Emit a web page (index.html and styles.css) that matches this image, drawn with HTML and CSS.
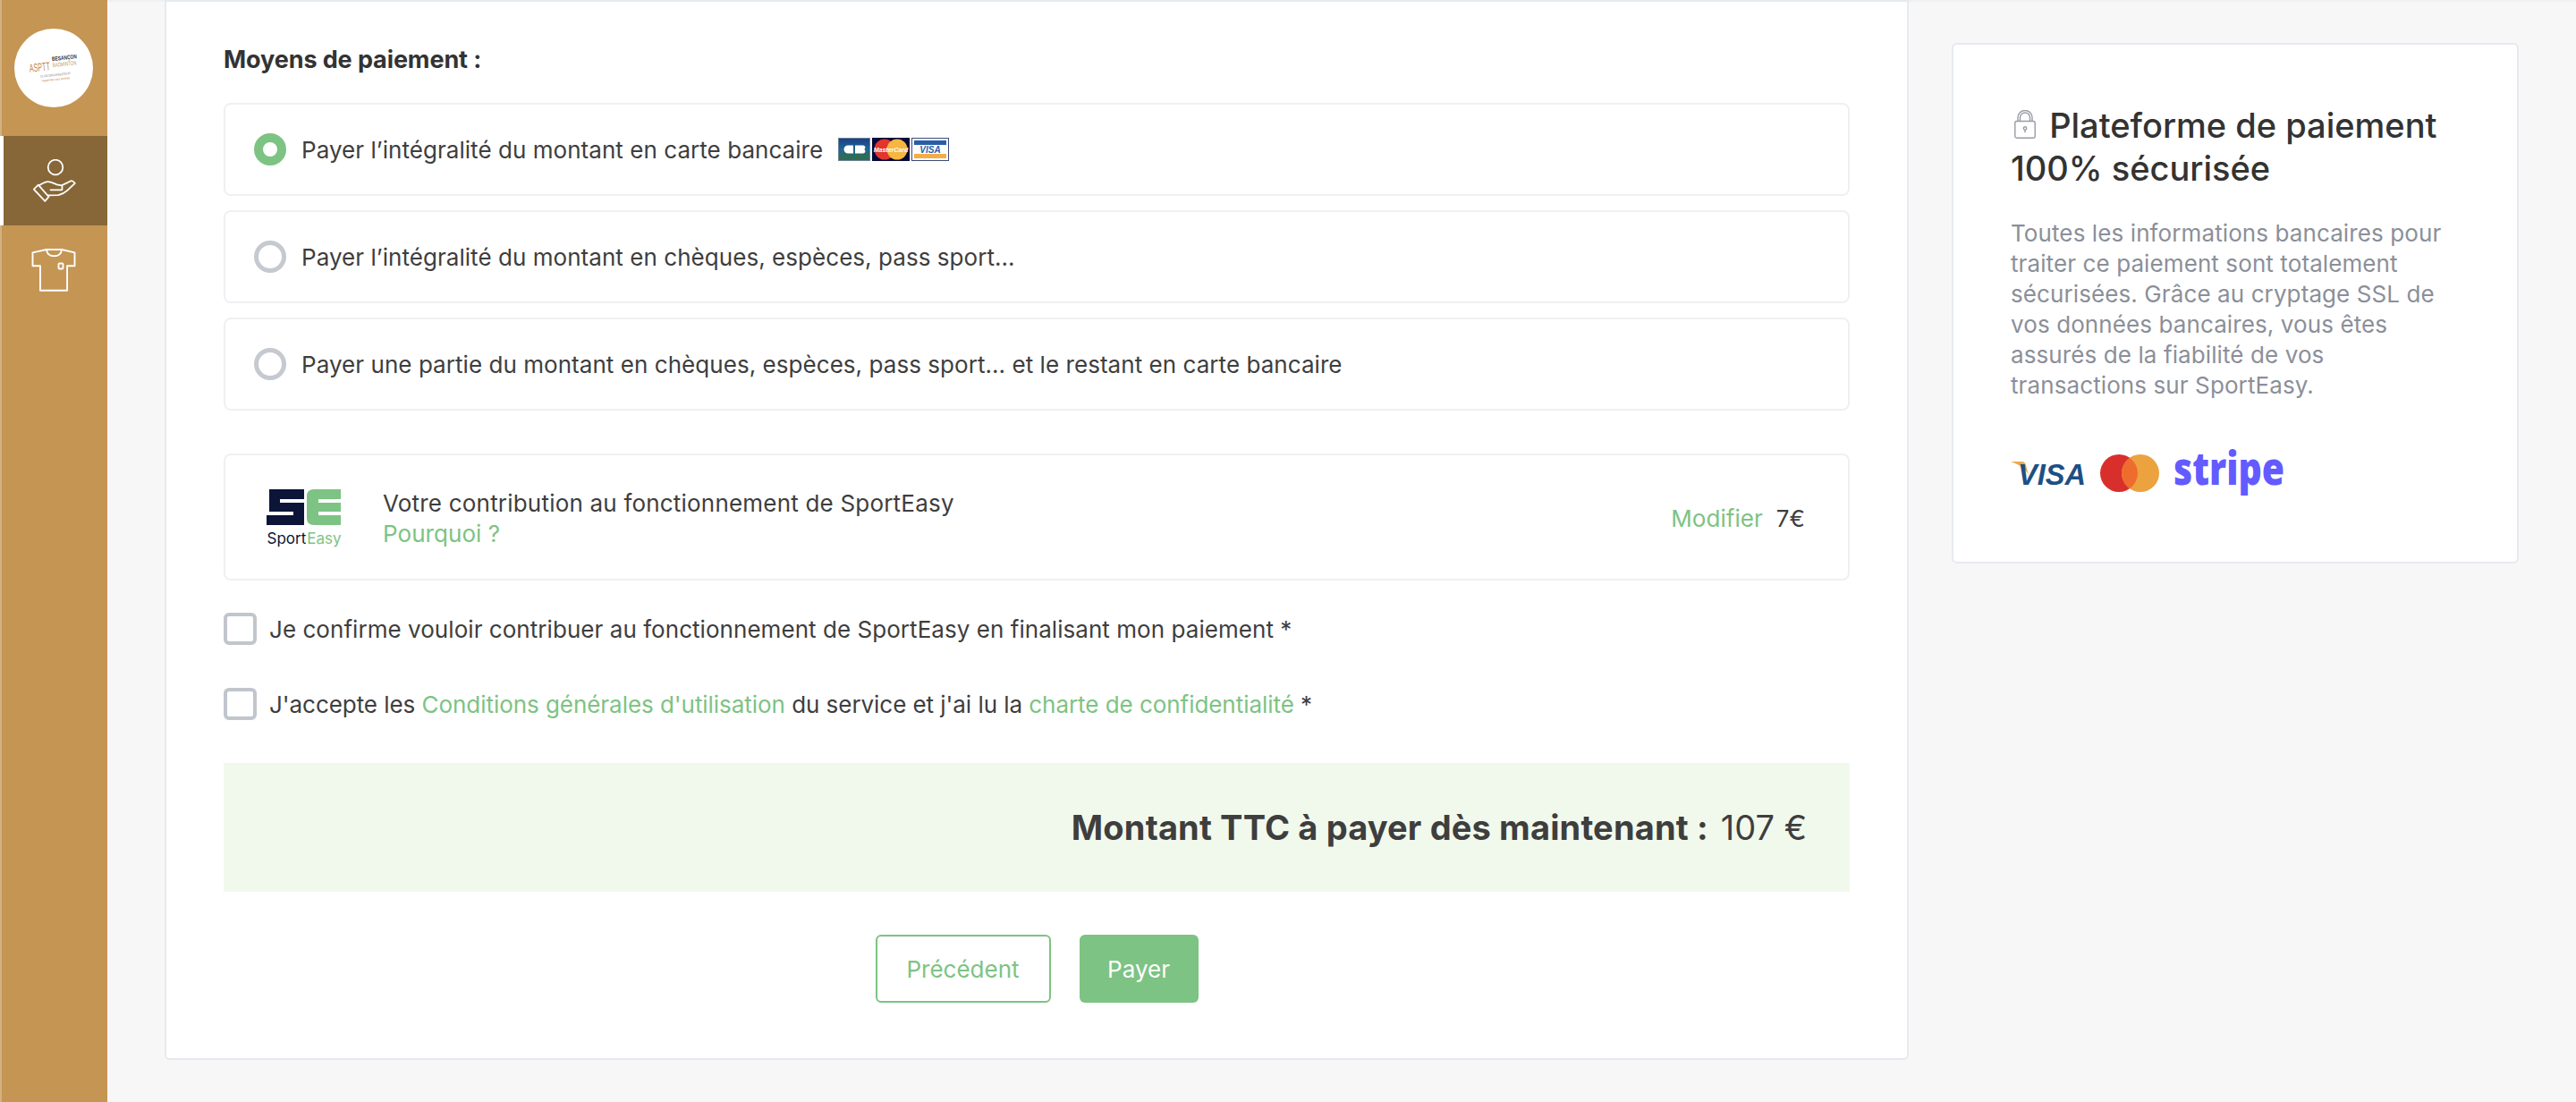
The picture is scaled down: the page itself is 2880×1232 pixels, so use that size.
FILE: index.html
```html
<!DOCTYPE html>
<html lang="fr">
<head>
  <meta charset="UTF-8">
  <title>Paiement</title>
  <link rel="stylesheet" href="styles.css">
</head>
<body>

<div class="layout">
  <!-- Sidebar -->
  <nav class="sidebar">
    <div class="club-logo">
      <svg width="88" height="88" viewBox="0 0 88 88">
        <circle cx="44" cy="44" r="44" fill="#fff"/>
        <g transform="rotate(-6 44 44)">
          <text x="17" y="46" textLength="23" lengthAdjust="spacingAndGlyphs" class="logo-asptt">ASPTT</text>
          <text x="43" y="36" textLength="28" lengthAdjust="spacingAndGlyphs" class="logo-city">BESANÇON</text>
          <text x="43" y="43" textLength="27" lengthAdjust="spacingAndGlyphs" class="logo-sport">BADMINTON</text>
          <text x="28" y="53" textLength="34" class="logo-line">CLUB ORGANISATEUR</text>
          <text x="29" y="58" textLength="32" class="logo-line logo-line-orange">rayonnez vos envies</text>
        </g>
      </svg>
    </div>
    <a class="nav-item nav-item-active" href="#">
      <svg width="48" height="48" viewBox="36 178 48 48" fill="none" stroke="#fff" stroke-width="1.8" stroke-linejoin="round" stroke-linecap="round">
        <circle cx="61" cy="187" r="8.3"/>
        <path d="M36.8 211.6l5-5 11.7 13.4-4.2 4.8z"/>
        <path d="M42 207.5c4-2 7-4.3 10.500-4.300 3.500 0 6.500 1.800 9.500 2.900 1.500.5 2.500 1.200 6.300 1l10-4.800c1.500-.6 3 .8 4.500 2.500l-8.500 8c-2.500 2.300-6 4.200-10 5.300l-12 .2"/>
        <path d="M55.500 212.300h12.800c.5-1.500.2-3 0-4.500"/>
      </svg>
    </a>
    <a class="nav-item" href="#">
      <svg width="50" height="50" viewBox="35 277 50 50" fill="none" stroke="#fff" stroke-width="1.9" stroke-linejoin="round">
        <path d="M52 279h17l14.500 3.400v14.800h-8.400v27.600H45V297.200h-8.500V282.400z"/>
        <path d="M52 279c.5 4.500 3.500 7.300 8.500 7.300s8-2.800 8.500-7.300"/>
        <rect x="65.500" y="294.500" width="5" height="6" rx="1"/>
      </svg>
    </a>
  </nav>

  <main class="content">
    <!-- Formulaire -->
    <section class="card payment-card">
      <h2 class="section-title">Moyens de paiement :</h2>

      <div class="option-list">
        <label class="option">
          <span class="radio radio-on"></span>
          <span>Payer l’intégralité du montant en carte bancaire</span>
          <span class="card-logos">
            <svg width="36" height="26" viewBox="0 0 36 26">
              <defs>
                <linearGradient id="cbGrad" x1="0" y1="0" x2="0" y2="1">
                  <stop offset="0" stop-color="#1d3f86"/>
                  <stop offset=".55" stop-color="#1d6a94"/>
                  <stop offset=".72" stop-color="#2c6a62"/>
                  <stop offset="1" stop-color="#2f6d52"/>
                </linearGradient>
              </defs>
              <rect x=".5" y=".5" width="35" height="25" fill="url(#cbGrad)" stroke="#6d8296"/>
              <path d="M17 8.500h-6a4.500 4.500 0 0 0 0 9h6z" fill="#fff"/>
              <path d="M19 8.500h9c3 0 3 4 1 4.500 2 .5 2 4.500-1 4.500h-9z" fill="#fff"/>
            </svg>
            <svg width="42" height="26" viewBox="0 0 42 26">
              <rect width="42" height="26" fill="#06083a"/>
              <circle cx="14" cy="13" r="11.500" fill="#e0362c"/>
              <circle cx="28" cy="13" r="11.500" fill="#f6b63f"/>
              <text x="21" y="15.500" text-anchor="middle" class="mc-label">MasterCard</text>
            </svg>
            <svg width="42" height="26" viewBox="0 0 42 26">
              <rect x=".5" y=".5" width="41" height="25" fill="#fff" stroke="#3c4a77"/>
              <rect x="3" y="3" width="36" height="5" fill="#2a5ea6"/>
              <rect x="3" y="18" width="36" height="5" fill="#f2ae45"/>
              <text x="21" y="17" text-anchor="middle" class="visa-small">VISA</text>
            </svg>
          </span>
        </label>
        <label class="option">
          <span class="radio"></span>
          <span>Payer l’intégralité du montant en chèques, espèces, pass sport...</span>
        </label>
        <label class="option">
          <span class="radio"></span>
          <span>Payer une partie du montant en chèques, espèces, pass sport... et le restant en carte bancaire</span>
        </label>
      </div>

      <div class="contribution">
        <div class="se-logo">
          <svg width="84" height="40" viewBox="0 0 84 40">
            <path d="M3 0H42V11H15V15H42V40H0V29H30V25H3Z" fill="#0c1538"/>
            <path d="M53 0H83V11H58V15H83V25H58V29H83V40H53Q45 40 45 32V8Q45 0 53 0Z" fill="#7dc383"/>
          </svg>
          <div class="se-name"><span>Sport</span><span class="se-name-green">Easy</span></div>
        </div>
        <div class="contribution-text">
          <div class="contribution-title">Votre contribution au fonctionnement de SportEasy</div>
          <a class="link" href="#">Pourquoi ?</a>
        </div>
        <div class="contribution-amount">
          <a class="link" href="#">Modifier</a>
          <span>7€</span>
        </div>
      </div>

      <label class="check-row">
        <span class="checkbox"></span>
        <span>Je confirme vouloir contribuer au fonctionnement de SportEasy en finalisant mon paiement *</span>
      </label>
      <label class="check-row">
        <span class="checkbox"></span>
        <span class="terms-text">J'accepte les <a class="link" href="#">Conditions générales d'utilisation</a> du service et j'ai lu la <a class="link" href="#">charte de confidentialité</a> *</span>
      </label>

      <div class="total">
        <strong>Montant TTC à payer dès maintenant :</strong>
        <span>107 €</span>
      </div>

      <div class="actions">
        <button class="btn btn-outline" type="button">Précédent</button>
        <button class="btn btn-primary" type="button">Payer</button>
      </div>
    </section>

    <!-- Colonne securite -->
    <aside class="card secure-card">
      <h3 class="secure-title">
        <svg class="lock" width="24" height="32" viewBox="0 0 24 32" fill="none" stroke="#989ca5" stroke-width="1.400">
          <rect x=".8" y="12.500" width="22.400" height="18.700" rx="2"/>
          <path d="M4 12.500V8.500a8 8 0 0 1 16 0v4"/>
          <path d="M6.500 12.500V8.500a5.500 5.500 0 0 1 11 0v4"/>
          <circle cx="12" cy="20.500" r="1.700"/>
          <path d="M12 22.200v3"/>
        </svg>
        Plateforme de paiement 100% sécurisée
      </h3>
      <p class="secure-text">Toutes les informations bancaires pour traiter ce paiement sont totalement sécurisées. Grâce au cryptage SSL de vos données bancaires, vous êtes assurés de la fiabilité de vos transactions sur SportEasy.</p>
      <div class="secure-logos">
        <svg class="visa-logo" width="90" height="52" viewBox="0 0 90 52">
          <path d="M0 13h12c3 0 4 1 5 4l3 11C17 21 9 16 0 13z" fill="#eba94a"/>
          <text x="8" y="39" textLength="76" lengthAdjust="spacingAndGlyphs" class="visa-big">VISA</text>
        </svg>
        <svg width="66" height="52" viewBox="0 0 66 52">
          <circle cx="21" cy="26" r="21" fill="#d92f2c"/>
          <circle cx="45" cy="26" r="21" fill="#eba23f"/>
          <path d="M33 8.800a21 21 0 0 1 0 34.400a21 21 0 0 1 0-34.400z" fill="#ee6c2d"/>
        </svg>
        <svg class="stripe-logo" width="180" height="76" viewBox="0 0 180 76">
          <text x="0" y="51" textLength="124" lengthAdjust="spacingAndGlyphs" class="stripe">stripe</text>
        </svg>
      </div>
    </aside>
  </main>
</div>

</body>
</html>
```

FILE: styles.css
```css
* {
  box-sizing: border-box;
}
body {
  font-family: Inter, "Liberation Sans", sans-serif;
  margin: 0;
  height: 1232px;
  overflow: hidden;
  background-color: #f7f7f8;
  color: #3e3e3e;
  font-size: 26px;
  letter-spacing: .05px;
}
a {
  text-decoration: none;
}
.link {
  color: #7dc383;
}
.layout {
  display: flex;
  height: 1232px;
}

/* Sidebar */
.sidebar {
  width: 120px;
  flex-shrink: 0;
  background-color: #c49553;
  box-shadow: inset 2px 0 0 #d3b07f;
  padding-top: 32px;
}
.club-logo {
  height: 120px;
  padding-left: 16px;
}
.club-logo svg {
  display: block;
}
.logo-asptt {
  font: 400 13px "Liberation Sans", sans-serif;
  fill: #c4854a;
}
.logo-city {
  font: 700 6.500px "Liberation Sans", sans-serif;
  fill: #333;
}
.logo-sport {
  font: 400 6.500px "Liberation Sans", sans-serif;
  fill: #c49a6a;
}
.logo-line {
  font: 400 3.500px "Liberation Sans", sans-serif;
  fill: #8a8a8a;
}
.logo-line-orange {
  fill: #d0773a;
}
.nav-item {
  display: flex;
  align-items: center;
  justify-content: center;
  height: 100px;
}
.nav-item-active {
  background-color: #876738;
  border-left: 4px solid #fff;
}
.nav-item-active svg {
  margin-left: -2px;
}

/* Main area */
.content {
  flex: 1;
  display: flex;
  align-items: flex-start;
  gap: 48px;
  padding-left: 64px;
  border-top: 2px solid #eef0f2;
}
.card {
  background-color: #fff;
  border: 2px solid #e6eaef;
  border-radius: 6px;
}
.payment-card {
  width: 1950px;
  height: 1185px;
  margin-top: -2px;
  padding: 46px 64px 0 64px;
  border-radius: 0 0 6px 6px;
}
.section-title {
  font-size: 27px;
  font-weight: 700;
  letter-spacing: -.1px;
  line-height: 38px;
  color: #333;
  margin: 0 0 29px 0;
}
.option-list {
  display: flex;
  flex-direction: column;
  gap: 16px;
}
.option {
  display: flex;
  align-items: center;
  height: 104px;
  padding-left: 32px;
  border: 2px solid #eef0f3;
  border-radius: 8px;
}
.radio {
  width: 36px;
  height: 36px;
  border-radius: 50%;
  border: 5px solid #c5c9d0;
  margin-right: 17px;
  flex-shrink: 0;
}
.radio-on {
  border: 10px solid #7dc383;
}
.card-logos {
  display: flex;
  gap: 2px;
  margin-left: 17px;
}
.card-logos svg {
  display: block;
}
.mc-label {
  font: italic 700 7px "Liberation Sans", sans-serif;
  letter-spacing: 0;
  fill: #fff;
}
.visa-small {
  font: italic 700 10px "Liberation Sans", sans-serif;
  letter-spacing: 0;
  fill: #2a5ea6;
}

/* Contribution */
.contribution {
  display: flex;
  align-items: center;
  height: 142px;
  margin-top: 48px;
  padding: 3px 48px 0 46px;
  border: 2px solid #eef0f3;
  border-radius: 8px;
}
.se-logo {
  width: 84px;
  margin-right: 46px;
}
.se-logo svg {
  display: block;
}
.se-name {
  font-size: 17px;
  line-height: 22px;
  letter-spacing: 0;
  color: #0c1538;
  text-align: center;
  margin-top: 4px;
}
.se-name-green {
  color: #7dc383;
  margin-left: 1px;
}
.contribution-text {
  flex: 1;
  line-height: 34px;
}
.contribution-title {
  letter-spacing: .2px;
}
.contribution-amount {
  display: flex;
  gap: 15px;
}

/* Checkboxes */
.check-row {
  display: flex;
  align-items: center;
  height: 36px;
  margin-top: 48px;
}
.contribution + .check-row {
  margin-top: 36px;
}
.checkbox {
  width: 37px;
  height: 36px;
  border: 4px solid #c1c5cc;
  border-radius: 6px;
  margin-right: 14px;
  flex-shrink: 0;
}
.terms-text {
  letter-spacing: -.05px;
}

/* Total */
.total {
  display: flex;
  align-items: center;
  justify-content: flex-end;
  gap: 14px;
  height: 144px;
  margin-top: 48px;
  padding-right: 48px;
  background-color: #f1f9ec;
  font-size: 38px;
  letter-spacing: 0;
}
.total strong {
  font-weight: 700;
  letter-spacing: .15px;
}

/* Buttons */
.actions {
  display: flex;
  justify-content: center;
  gap: 32px;
  margin-top: 48px;
}
.btn {
  height: 76px;
  font-family: inherit;
  font-size: 26px;
  border-radius: 6px;
  cursor: pointer;
}
.btn-outline {
  width: 196px;
  background-color: #fff;
  color: #7dc383;
  border: 2px solid #7dc383;
}
.btn-primary {
  width: 133px;
  background-color: #7dc383;
  color: #fff;
  border: none;
}

/* Secure card */
.secure-card {
  width: 634px;
  height: 582px;
  margin-top: 46px;
  padding: 66px 64px 0 64px;
}
.secure-title {
  font-size: 38px;
  font-weight: 500;
  line-height: 48px;
  letter-spacing: 0;
  color: #333;
  margin: 0 0 32px 0;
}
.lock {
  margin: 0 5px 0 4px;
  vertical-align: -1px;
}
.secure-text {
  font-size: 26px;
  line-height: 34px;
  letter-spacing: .1px;
  color: #8b8f99;
  margin: 0 0 55px 0;
}
.secure-logos {
  display: flex;
  align-items: center;
  gap: 16px;
}
.secure-logos svg {
  display: block;
}
.visa-logo {
  margin-right: -6px;
}
.stripe-logo {
  margin: -12px 0;
}
.visa-big {
  font: italic 700 34px "Liberation Sans", sans-serif;
  letter-spacing: 0;
  fill: #1d4f85;
}
.stripe {
  font-family: "Open Sans", sans-serif;
  font-size: 52px;
  font-weight: 800;
  letter-spacing: 0;
  fill: #635bff;
}
```
